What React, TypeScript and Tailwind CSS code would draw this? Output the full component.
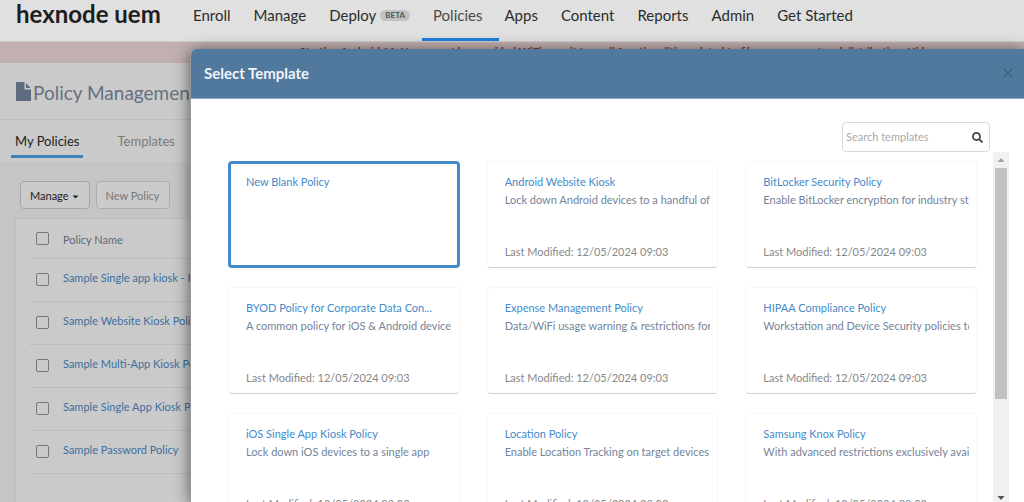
import { FaSearch, FaCaretDown } from "react-icons/fa";

const navItems = ["Enroll", "Manage", "Deploy", "Policies", "Apps", "Content", "Reports", "Admin", "Get Started"];

const policies = [
  "Sample Single app kiosk - File Viewer",
  "Sample Website Kiosk Policy",
  "Sample Multi-App Kiosk Policy",
  "Sample Single App Kiosk Policy",
  "Sample Password Policy",
];

const templates = [
  { title: "New Blank Policy", text: "", selected: true },
  { title: "Android Website Kiosk", text: "Lock down Android devices to a handful of websites" },
  { title: "BitLocker Security Policy", text: "Enable BitLocker encryption for industry standards" },
  { title: "BYOD Policy for Corporate Data Con...", text: "A common policy for iOS & Android device" },
  { title: "Expense Management Policy", text: "Data/WiFi usage warning & restrictions for devices" },
  { title: "HIPAA Compliance Policy", text: "Workstation and Device Security policies to comply" },
  { title: "iOS Single App Kiosk Policy", text: "Lock down iOS devices to a single app" },
  { title: "Location Policy", text: "Enable Location Tracking on target devices" },
  { title: "Samsung Knox Policy", text: "With advanced restrictions exclusively available" },
];

function TopNav() {
  return (
    <header className="flex h-[42px] items-start border-b border-[#cfcfcf] bg-[#e0e0e0] pl-4">
      <a href="#home" className="w-[177px] shrink-0 text-[24px] leading-[28px] font-bold text-[#1e1e1e]">
        hexnode uem
      </a>
      <nav className="flex h-full items-start gap-[23px] text-[15px] leading-[30px] text-[#2c2c2c]">
        {navItems.map((item) => (
          <a
            key={item}
            href="#nav"
            className={
              item === "Policies"
                ? "-mr-[18px] -ml-[11px] h-full border-b-[3px] border-[#1c7fdc] pr-[17px] pl-[11px] text-[#4a4a4a]"
                : "flex items-center"
            }
          >
            {item}
            {item === "Deploy" && (
              <span className="ml-1 rounded-full bg-[#c2c2c2] px-[5px] text-[8px] leading-[11px] font-bold text-[#555]">BETA</span>
            )}
          </a>
        ))}
      </nav>
    </header>
  );
}

function PolicyPage() {
  return (
    <main>
      <p className="flex h-[21px] justify-center bg-[#c2b0b0] pl-[206px] text-[11px] leading-[20px] font-bold whitespace-nowrap text-[#8a2a2a]">
        Starting Android 11, Users must be provided WiFi permit to avail functionalities related to file management and distribution. Hide
      </p>
      <div className="flex h-[57px] items-center gap-0.5 border-b border-[#bdbdbd] pl-4">
        <svg viewBox="0 0 15 19" className="h-[19px] w-[15px]" fill="#5c6b80" aria-hidden="true">
          <path d="M0 0H8.500V7.500H15V19H0Z" />
          <path d="M10 1L14.500 6H10Z" />
        </svg>
        <h1 className="pt-1 text-[19px] text-[#66707f]">Policy Management</h1>
      </div>
      <div className="flex h-[43px] items-start gap-[26px] border-b border-[#c3c3c3] bg-[#cacaca] pl-[11px] text-[13px]">
        <button className="h-[38px] border-b-[3px] border-[#3d82bd] px-1 pt-[9px] text-[#222]">My Policies</button>
        <button className="h-[38px] px-2 pt-1.5 text-[#7a7a7a]">Templates</button>
      </div>
      <div className="bg-[#c5c5c5] pt-[18px] pl-[15px]">
        <div className="flex gap-1.5 pl-[5px] text-[11px]">
          <button className="flex h-7 items-center gap-0.5 rounded-sm border border-[#a5a5a5] bg-[#cbcbcb] px-[9px] pt-0.5 text-[#222]">
            Manage <FaCaretDown className="size-[9px]" />
          </button>
          <button className="h-7 rounded-sm border border-[#adadad] bg-[#cbcbcb] px-[9px] pt-0.5 text-[#777]">New Policy</button>
        </div>
        <div className="mt-[9px] h-screen border border-[#bebebe] bg-[#cacaca] pl-[13px]">
          <table className="w-full border-collapse text-left text-[11px]">
            <thead>
              <tr className="h-[39px] border-b border-[#bdbdbd]">
                <th className="w-[34px] pl-[7px]">
                  <input type="checkbox" aria-label="Select all policies" className="block size-[13px] appearance-none rounded-xs border border-[#777]" />
                </th>
                <th className="pt-1 font-normal text-[#606878]">Policy Name</th>
              </tr>
            </thead>
            <tbody>
              {policies.map((name) => (
                <tr key={name} className="h-[43px] border-b border-[#bdbdbd]">
                  <td className="w-[34px] pl-[7px]">
                    <input type="checkbox" aria-label={name} className="block size-[13px] appearance-none rounded-xs border border-[#777]" />
                  </td>
                  <td className="pb-[3px] text-[#3b6f9f]">
                    <a href="#policy">{name}</a>
                  </td>
                </tr>
              ))}
            </tbody>
          </table>
        </div>
      </div>
    </main>
  );
}

function TemplateDialog() {
  return (
    <section
      role="dialog"
      aria-label="Select Template"
      className="absolute top-[49px] right-0 bottom-0 left-[190px] flex flex-col overflow-hidden rounded-tl-md border-l border-[#999] bg-white shadow-[0_2px_16px_rgba(0,0,0,0.6)]"
    >
      <header className="flex h-[50px] shrink-0 items-center justify-between border-b border-[#8ba8c2] bg-[#50799d] pr-[10px] pl-[13px]">
        <h2 className="text-[15px] font-bold text-[#f0f4f8]">Select Template</h2>
        <button aria-label="Close" className="pb-0.5 text-[#3f617f]">
          <svg viewBox="0 0 12 12" className="size-3" stroke="currentColor" strokeWidth="1.500" aria-hidden="true">
            <path d="M2 2L10 10M10 2L2 10" />
          </svg>
        </button>
      </header>
      <div className="flex shrink-0 justify-end pt-[23px] pr-[34px]">
        <label className="flex h-[30px] w-[148px] items-center rounded-sm border border-[#d8d8d8] pr-1.5 pl-[3px]">
          <input
            type="text"
            aria-label="Search templates"
            placeholder="Search templates"
            className="w-full min-w-0 text-[11px] outline-none placeholder:text-[#aaa]"
          />
          <FaSearch className="size-[11px] shrink-0 text-[#444]" />
        </label>
      </div>
      <div className="flex min-h-0 flex-1 pr-[15px] pl-[37px]">
        <div className="min-w-0 flex-1 overflow-hidden pt-[9px]">
          <ul className="grid grid-cols-3 gap-x-[27px] gap-y-[19px]">
            {templates.map((t) => (
              <li
                key={t.title}
                className={
                  t.selected
                    ? "flex h-[107px] flex-col rounded-sm border-[3px] border-[#438bca] px-[15px] pt-[9px]"
                    : "flex h-[107px] flex-col rounded-sm border border-[#f8f8f8] border-b-[#d0d0d0] pt-[11px] pr-[7px] pb-1.5 pl-[17px]"
                }
              >
                <a href="#template" className="text-[11px] leading-[18px] text-[#438bca]">{t.title}</a>
                <p className="overflow-hidden text-[11px] leading-[18px] whitespace-nowrap text-[#74849b]">{t.text}</p>
                {!t.selected && (
                  <p className="mt-auto text-[11px] leading-[18px] text-[#888]">Last Modified: 12/05/2024 09:03</p>
                )}
              </li>
            ))}
          </ul>
        </div>
        <div className="ml-4 flex w-4 shrink-0 flex-col items-center justify-between bg-[#f1f1f1]" aria-hidden="true">
          <svg viewBox="0 0 16 16" className="size-4 shrink-0" fill="#a3a3a3"><path d="M4.500 10L8 6L11.500 10Z" /></svg>
          <div className="mb-auto h-[66%] w-3 bg-[#c1c1c1]" />
          <svg viewBox="0 0 16 10" className="h-[10px] w-4 shrink-0" fill="#505050"><path d="M4.500 4H11.500L8 8Z" /></svg>
        </div>
      </div>
    </section>
  );
}

export default function App() {
  return (
    <div className="relative h-screen overflow-hidden bg-[#cacaca] font-['Lato',sans-serif]">
      <TopNav />
      <PolicyPage />
      <TemplateDialog />
    </div>
  );
}
